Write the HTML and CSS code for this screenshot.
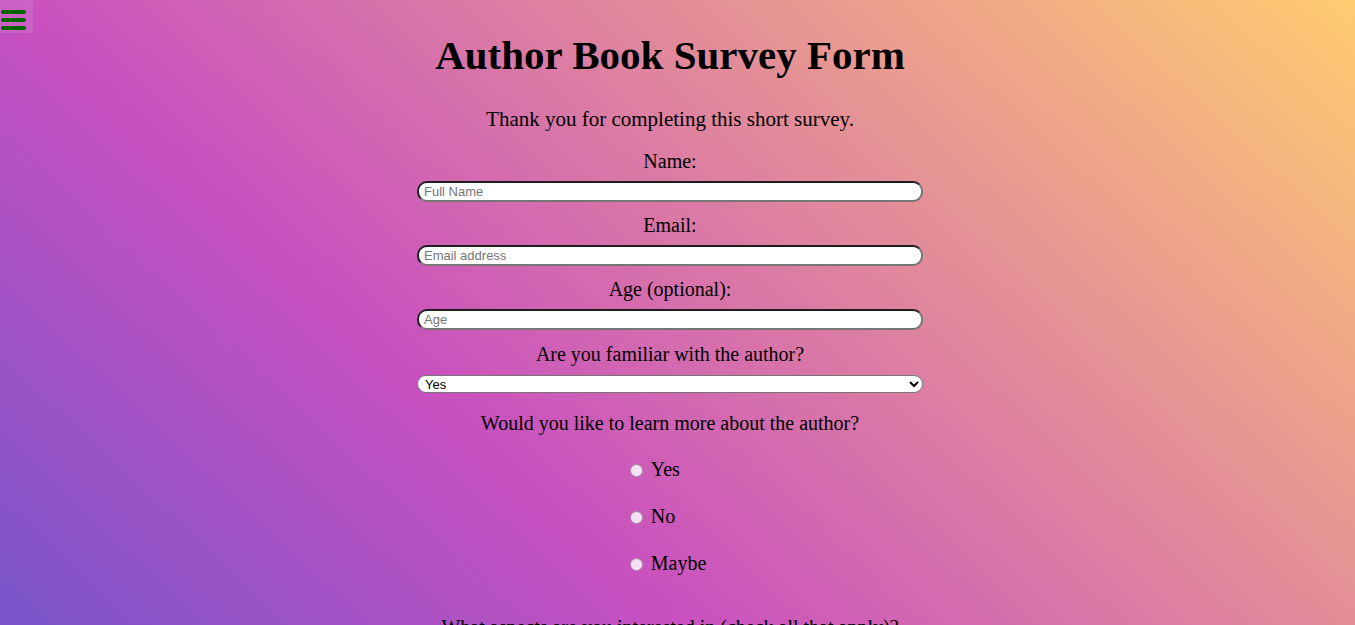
FILE: index.html
```html
<!DOCTYPE html>
<html lang="en">
<head>
<meta charset="utf-8">
<title>Author Book Survey Form</title>
<link rel="stylesheet" href="styles.css">
</head>
<body>
<div class="page">
  <button class="menu-toggle" type="button" aria-label="Menu">
    <span class="bar"></span><span class="bar"></span><span class="bar"></span>
  </button>
  <main class="content">
    <h1 class="title">Author Book Survey Form</h1>
    <p class="description">Thank you for completing this short survey.</p>
    <form class="survey">
      <div class="field">
        <label class="label" for="name">Name:</label>
        <input class="text-input" id="name" type="text" placeholder="Full Name">
      </div>
      <div class="field">
        <label class="label" for="email">Email:</label>
        <input class="text-input" id="email" type="email" placeholder="Email address">
      </div>
      <div class="field">
        <label class="label" for="age">Age (optional):</label>
        <input class="text-input" id="age" type="number" placeholder="Age">
      </div>
      <div class="field field-select">
        <label class="label" for="familiar">Are you familiar with the author?</label>
        <select class="select" id="familiar">
          <option>Yes</option>
          <option>No</option>
        </select>
      </div>
      <fieldset class="radio-field">
        <p class="label">Would you like to learn more about the author?</p>
        <div class="options">
          <label class="option"><input class="radio" type="radio" name="learn" value="yes">Yes</label>
          <label class="option"><input class="radio" type="radio" name="learn" value="no">No</label>
          <label class="option"><input class="radio" type="radio" name="learn" value="maybe">Maybe</label>
        </div>
      </fieldset>
      <fieldset class="check-field">
        <p class="label">What aspects are you interested in (check all that apply)?</p>
        <div class="options">
          <label class="option"><input type="checkbox">Biography</label>
          <label class="option"><input type="checkbox">Books</label>
        </div>
      </fieldset>
    </form>
  </main>
</div>
</body>
</html>
```
FILE: styles.css
```css
html, body {
  margin: 0;
  padding: 0;
}

body {
  font-family: "Liberation Serif", "Times New Roman", serif;
  color: #000;
}

.page {
  position: relative;
  height: 100vh;
  overflow: hidden;
  background-color: #4158D0;
  background-image: linear-gradient(43deg, #4158D0 0%, #C850C0 46%, #FFCC70 100%);
  background-size: 100% 1060px;
  background-repeat: no-repeat;
  background-position: top left;
}

.menu-toggle {
  position: absolute;
  top: 0;
  left: 0;
  width: 33px;
  height: 33px;
  margin: 0;
  padding: 10px 0 0 1px;
  border: none;
  background: rgba(255, 255, 255, 0.1);
  display: flex;
  flex-direction: column;
  gap: 4px;
  box-sizing: border-box;
  cursor: pointer;
}

.bar {
  display: block;
  width: 25px;
  height: 4px;
  border-radius: 2px;
  background: #006400;
}

.content {
  display: flex;
  flex-direction: column;
  align-items: center;
  padding-right: 15px;
}

.title {
  margin: 32px 0 30px;
  font-size: 41px;
  line-height: 46px;
  font-weight: bold;
}

.description {
  margin: 0 0 19px;
  font-size: 21px;
  line-height: 23px;
}

.survey {
  display: flex;
  flex-direction: column;
  align-items: center;
}

.field {
  display: flex;
  flex-direction: column;
  align-items: center;
  gap: 8px;
  margin-bottom: 12px;
}

.field-select {
  margin-top: 1px;
  gap: 9px;
  margin-bottom: 19px;
}

.label {
  margin: 0;
  font-size: 20px;
  line-height: 23px;
  text-align: center;
}

.text-input {
  width: 506px;
  height: 21px;
  box-sizing: border-box;
  margin: 0;
  padding: 0 5px;
  border-width: 2px;
  border-style: solid;
  border-color: #1e1e1e #767676 #767676 #1e1e1e;
  border-radius: 10px;
  background: #fff;
  font-family: "Liberation Sans", Arial, sans-serif;
  font-size: 13px;
  color: #000;
}

.text-input::placeholder {
  color: #757575;
}

.select {
  width: 506px;
  height: 18px;
  box-sizing: border-box;
  margin: 0;
  padding: 0 0 0 3px;
  border: 1px solid #767676;
  border-radius: 10px;
  background: #fff;
  font-family: "Liberation Sans", Arial, sans-serif;
  font-size: 13px;
  color: #000;
}

.radio-field,
.check-field {
  margin: 0;
  padding: 0;
  border: none;
  display: flex;
  flex-direction: column;
  align-items: center;
}

.radio-field {
  margin-bottom: 41px;
}

.radio-field .options {
  display: flex;
  flex-direction: column;
  align-items: flex-start;
  gap: 24px;
  padding-top: 23px;
  margin-left: -4px;
}

.check-field .options {
  display: flex;
  flex-direction: column;
  gap: 12px;
  padding-top: 12px;
}

.option {
  display: flex;
  align-items: center;
  font-size: 20px;
  line-height: 23px;
}

.radio {
  appearance: none;
  -webkit-appearance: none;
  width: 13px;
  height: 13px;
  margin: 2px 8px 0 0;
  border-radius: 50%;
  border: 1px solid rgba(140, 120, 140, 0.75);
  background: rgba(255, 255, 255, 0.82);
  box-sizing: border-box;
}
```
